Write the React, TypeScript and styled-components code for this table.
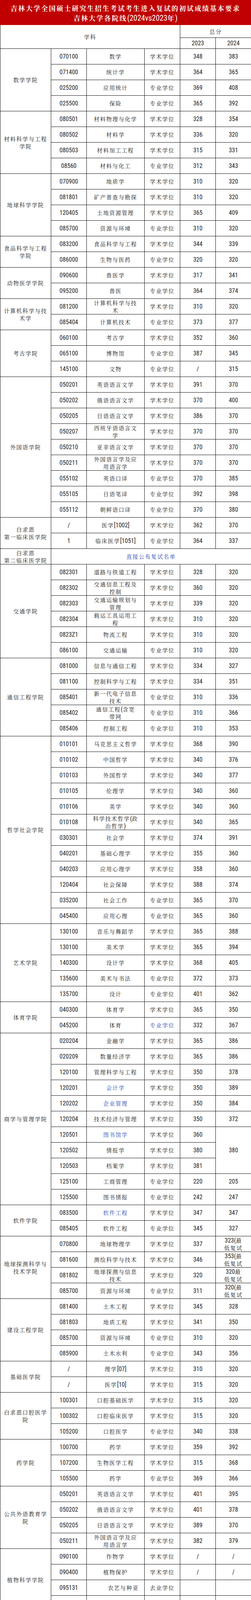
import React from "react";
import styled, { createGlobalStyle } from "styled-components";

const GlobalStyle = createGlobalStyle`
  html, body {
    margin: 0;
    padding: 0;
    background: #fff;
  }
  body {
    font-family: "Noto Serif CJK SC", "Noto Sans CJK SC", serif;
    color: #222;
  }
`;

const Page = styled.div`
  width: 642px;
`;

const Latin = styled.span`
  font-family: "Roboto Condensed", "Liberation Sans", sans-serif;
  font-size: 16px;
  letter-spacing: 0;
`;

const Banner = styled.div`
  height: 64px;
  box-sizing: border-box;
  padding-top: 8px;
  background: #c00000;
  color: #fff;
  text-align: center;
  font-size: 17px;
  line-height: 25px;
  letter-spacing: 2.6px;
  font-weight: 700;
  white-space: nowrap;

  ${Latin} {
    font-size: 20px;
    font-weight: 400;
  }
`;

const Sheet = styled.div`
  display: grid;
  grid-template-columns: 130px 91px 148px 91px 91px 91px;
  grid-template-rows: 33px 28px;
  grid-auto-rows: 40px;
  border-left: 1px solid #111;
  font-size: 14px;
  letter-spacing: 1.8px;
`;

const Cell = styled.div<{ $rows?: number; $cols?: number; $blue?: boolean; $indent?: boolean }>`
  grid-row: span ${({ $rows }) => $rows ?? 1};
  grid-column: span ${({ $cols }) => $cols ?? 1};
  box-sizing: border-box;
  border-right: 1px solid #111;
  border-bottom: 1px solid #111;
  display: flex;
  align-items: center;
  justify-content: center;
  padding-left: ${({ $indent }) => ($indent ? "40px" : "0")};
  text-align: center;
  white-space: pre-line;
  line-height: 19px;
  color: ${({ $blue }) => ($blue ? "#2c4bb0" : "#222")};
  overflow: hidden;
`;

function Txt({ text }: { text: string }) {
  const parts = text.split(/([\x21-\x7E]+)/);
  return (
    <span>
      {parts.map((p, i) =>
        /^[\x21-\x7E]+$/.test(p) ? <Latin key={i}>{p}</Latin> : <React.Fragment key={i}>{p}</React.Fragment>
      )}
    </span>
  );
}

interface Item {
  code: string;
  name: string;
  type: string;
  y23: string | null;
  y24: string | null;
  span23?: number;
  span24?: number;
  blueName?: boolean;
  blueType?: boolean;
  indent?: boolean;
}

interface Group {
  college: string;
  rows: Item[];
  notice?: string;
}

const A = "学术学位";
const P = "专业学位";

function r(code: string, name: string, type: string, y23: string | null, y24: string | null, extra: Partial<Item> = {}): Item {
  return { code, name, type, y23, y24, ...extra };
}

const groups: Group[] = [
  {
    college: "数学学院",
    rows: [
      r("070100", "数学", A, "348", "383"),
      r("071400", "统计学", A, "364", "365"),
      r("025200", "应用统计", P, "369", "408"),
      r("025500", "保险", P, "365", "392"),
    ],
  },
  {
    college: "材料科学与工程\n学院",
    rows: [
      r("080501", "材料物理与化学", A, "328", "354"),
      r("080502", "材料学", A, "336", "320"),
      r("080503", "材料加工工程", A, "315", "331"),
      r("08560", "材料与化工", P, "312", "343"),
    ],
  },
  {
    college: "地球科学学院",
    rows: [
      r("070900", "地质学", A, "310", "320"),
      r("081801", "矿产普查与勘探", A, "310", "320"),
      r("120405", "土地资源管理", A, "365", "409"),
      r("085700", "资源与环境", P, "310", "320"),
    ],
  },
  {
    college: "食品科学与工程\n学院",
    rows: [
      r("083200", "食品科学与工程", A, "344", "339"),
      r("086000", "生物与医药", P, "320", "320"),
    ],
  },
  {
    college: "动物医学学院",
    rows: [
      r("090600", "兽医学", A, "317", "341"),
      r("095200", "兽医", P, "364", "374"),
    ],
  },
  {
    college: "计算机科学与技\n术学",
    rows: [
      r("081200", "计算机科学与技\n术", A, "310", "320"),
      r("085404", "计算机技术", P, "373", "377"),
    ],
  },
  {
    college: "考古学院",
    rows: [
      r("060100", "考古学", A, "352", "360"),
      r("065100", "博物馆", P, "387", "345"),
      r("145100", "文物", P, "/", "315"),
    ],
  },
  {
    college: "外国语学院",
    rows: [
      r("050201", "英语语言文学", A, "391", "370"),
      r("050202", "俄语语言文学", A, "370", "400"),
      r("050205", "日语语言文学", A, "386", "370"),
      r("050207", "西班牙语语言文\n学", A, "370", "370"),
      r("050210", "亚非语言文学", A, "370", "370"),
      r("050211", "外国语言学及应\n用语言学", A, "370", "370"),
      r("055102", "英语口译", P, "370", "385"),
      r("055105", "日语笔译", P, "392", "398"),
      r("055112", "朝鲜语口译", P, "370", "380"),
    ],
  },
  {
    college: "白求恩\n第一临床医学院",
    rows: [
      r("/", "医学[1002]", A, "362", "370"),
      r("1", "临床医学[1051]", P, "364", "337"),
    ],
  },
  {
    college: "白求恩\n第二临床医学院",
    rows: [],
    notice: "直接公布复试名单",
  },
  {
    college: "交通学院",
    rows: [
      r("082301", "道路与铁道工程", A, "328", "320"),
      r("082302", "交通信息工程及\n控制", A, "360", "320"),
      r("082303", "交通运输规划与\n管理", A, "339", "320"),
      r("082304", "载运工具运用工\n程", A, "310", "320"),
      r("0823Z1", "物流工程", A, "310", "320"),
      r("086100", "交通运输", P, "310", "320"),
    ],
  },
  {
    college: "通信工程学院",
    rows: [
      r("081000", "信息与通信工程", A, "334", "327"),
      r("081100", "控制科学与工程", A, "334", "351"),
      r("085401", "新一代电子信息\n技术", P, "310", "336"),
      r("085402", "通信工程(含宽\n带网", P, "310", "366"),
      r("085406", "控制工程", P, "310", "353"),
    ],
  },
  {
    college: "哲学社会学院",
    rows: [
      r("010101", "马克思主义哲学", A, "368", "390"),
      r("010102", "中国哲学", A, "340", "376"),
      r("010103", "外国哲学", A, "340", "377"),
      r("010105", "伦理学", A, "340", "360"),
      r("010106", "美学", A, "340", "360"),
      r("010108", "科学技术哲学(政\n治哲学)", A, "340", "365"),
      r("030301", "社会学", A, "374", "391"),
      r("040201", "基础心理学", A, "355", "360"),
      r("040203", "应用心理学", A, "358", "360"),
      r("120404", "社会保障", A, "388", "374"),
      r("035200", "社会工作", P, "365", "370"),
      r("045400", "应用心理", P, "365", "360"),
    ],
  },
  {
    college: "艺术学院",
    rows: [
      r("130100", "音乐与舞蹈学", A, "365", "388"),
      r("130100", "美术学", A, "365", "394"),
      r("140300", "设计学", A, "368", "405"),
      r("135600", "美术与书法", P, "372", "373"),
      r("135700", "设计", P, "401", "362"),
    ],
  },
  {
    college: "体育学院",
    rows: [
      r("040300", "体育学", A, "365", "350"),
      r("045200", "体育", P, "332", "367", { blueType: true }),
    ],
  },
  {
    college: "商学与管理学院",
    rows: [
      r("020204", "金融学", A, "365", "386"),
      r("020209", "数量经济学", A, "365", "386"),
      r("120100", "管理科学与工程", A, "350", "378"),
      r("120201", "会计学", A, "350", "389", { blueName: true }),
      r("120202", "企业管理", A, "350", "384", { blueName: true }),
      r("120204", "技术经济与管理", A, "350", "372"),
      r("120501", "图书馆学", A, "360", "380", { blueName: true, span24: 3 }),
      r("120502", "情报学", A, "380", null),
      r("120503", "档案学", A, "381", null),
      r("125100", "工商管理", P, "220", "205"),
      r("125500", "图书情报", P, "242", "247"),
    ],
  },
  {
    college: "软件学院",
    rows: [
      r("083500", "软件工程", A, "347", "347", { blueName: true }),
      r("085405", "软件工程", P, "345", "327"),
    ],
  },
  {
    college: "地球探测科学与\n技术学院",
    rows: [
      r("070800", "地球物理学", A, "337", "323(最\n低复试"),
      r("081600", "测绘科学与技术", A, "346", "353(最\n低复试"),
      r("081802", "地球探测与信息\n技术", A, "320", "320最\n低复试"),
      r("085700", "资源与环境", P, "311", "320(最\n低复试"),
    ],
  },
  {
    college: "建设工程学院",
    rows: [
      r("081400", "土木工程", A, "345", "328"),
      r("081803", "地质工程", A, "341", "350"),
      r("085700", "资源与环境", P, "310", "320"),
      r("085900", "土木水利", P, "343", "356"),
    ],
  },
  {
    college: "基础医学院",
    rows: [
      r("/", "理学[07]", A, "310", "320"),
      r("/", "医学[10]", A, "315", "320"),
    ],
  },
  {
    college: "白求恩口腔医学\n院",
    rows: [
      r("100301", "口腔基础医学", A, "315", "320"),
      r("100302", "口腔临床医学", A, "315", "320"),
      r("105200", "口腔医学", P, "340", "338"),
    ],
  },
  {
    college: "药学院",
    rows: [
      r("100700", "药学", A, "359", "392"),
      r("107200", "生物医学工程", A, "315", "368"),
      r("105500", "药学", P, "369", "366"),
    ],
  },
  {
    college: "公共外语教育学\n院",
    rows: [
      r("050201", "英语语言文学", A, "401", "395"),
      r("050202", "俄语语言文学", A, "401", "378"),
      r("050205", "日语语言文学", A, "389", "370"),
      r("050211", "外国语言学及应\n用语言学", A, "382", "379"),
    ],
  },
  {
    college: "植物科学学院",
    rows: [
      r("090100", "作物学", A, "/", "/"),
      r("090400", "植物保护", A, "/", "/"),
      r("095131", "农艺与种亚", "去业学位", "", "", { indent: true }),
      r("095132", "资源利用与植物", P, "/", "/"),
    ],
  },
  {
    college: "动物科学学院",
    rows: [
      r("071000", "生物学", A, "343", "320"),
      r("090500", "畜牧学", A, "310", "320"),
      r("086000", "生物与医药", P, "310", "320"),
      r("095133", "畜牧", P, "330", "320"),
    ],
  },
  {
    college: "机械与航空航天\n工程学院",
    rows: [
      r("080100", "力学", A, "310", "320"),
      r("080200", "机械工程", A, "322", "366"),
      r("0802Z2", "工业工程", A, "310", "320"),
      r("085500", "机械", P, "310", "345", { blueName: true }),
    ],
  },
  {
    college: "原子与分子物理\n研究所",
    rows: [r("070203", "原子与分子物理", A, "310", "360", { blueName: true })],
  },
  {
    college: "东北亚学院",
    rows: [
      r("020105", "世界经济", A, "", "校线", { span23: 6, span24: 6 }),
      r("020106", "人口、资源与环\n境经济学", A, null, null),
      r("020202", "区域经济学", A, null, null),
      r("030206", "国际政治", A, null, null),
      r("030302", "人口学", A, null, null),
      r("060300", "世界史", A, null, null),
    ],
  },
  {
    college: "古籍研究所",
    rows: [r("060200", "中国史", A, "355", "362")],
  },
  {
    college: "高等教育研究所",
    rows: [r("040106", "高等教育学", A, "355", "360")],
  },
  {
    college: "国家发展与安全\n研究院",
    rows: [r("140200\n国家安全", "国家安全学", A, "385", "409")],
  },
  {
    college: "综合极端条件高\n压科学中心",
    rows: [r("070205", "凝聚态物理", A, "310", "320")],
  },
  {
    college: "人工智能学院",
    rows: [
      r("081100", "控制科学与工程", A, "310", "320"),
      r("081200", "计算机科学与技\n术", A, "310", "320"),
    ],
  },
  {
    college: "新能源与环境学\n院",
    rows: [
      r("077601", "环境科学", A, "320", "336"),
      r("0818J8", "地下新能源与碳储\n工程", A, "316", "320\n(最低复"),
      r("0818Z4", "地下水科学与工程", A, "316", "320"),
      r("0830Z1", "水文学与水资源", A, "316", "353"),
      r("083002", "环境工程", A, "340", "320"),
      r("085700", "资源与环境", P, "318", "332"),
      r("085900", "土木水利", P, "311", "346"),
    ],
  },
];

export default function App() {
  return (
    <Page>
      <GlobalStyle />
      <Banner>
        <div>吉林大学全国硕士研究生招生考试考生进入复试的初试成绩基本要求</div>
        <div>
          <Txt text="吉林大学各院线(2024vs2023年)" />
        </div>
      </Banner>
      <Sheet>
        <Cell $cols={4} $rows={2}>学科</Cell>
        <Cell $cols={2}>总分</Cell>
        <Cell>
          <Txt text="2023" />
        </Cell>
        <Cell>
          <Txt text="2024" />
        </Cell>
        {groups.map((g, gi) => {
          if (g.notice) {
            return (
              <React.Fragment key={gi}>
                <Cell>{g.college}</Cell>
                <Cell $cols={5} $blue>
                  {g.notice}
                </Cell>
              </React.Fragment>
            );
          }
          return (
            <React.Fragment key={gi}>
              {g.rows.map((item, ri) => (
                <React.Fragment key={ri}>
                  {ri === 0 && <Cell $rows={g.rows.length}>{g.college}</Cell>}
                  <Cell>
                    <Txt text={item.code} />
                  </Cell>
                  <Cell $blue={item.blueName} $indent={item.indent}>
                    <Txt text={item.name} />
                  </Cell>
                  <Cell $blue={item.blueType}>{item.type}</Cell>
                  {item.y23 !== null && (
                    <Cell $rows={item.span23}>
                      <Txt text={item.y23} />
                    </Cell>
                  )}
                  {item.y24 !== null && (
                    <Cell $rows={item.span24}>
                      <Txt text={item.y24} />
                    </Cell>
                  )}
                </React.Fragment>
              ))}
            </React.Fragment>
          );
        })}
      </Sheet>
    </Page>
  );
}
